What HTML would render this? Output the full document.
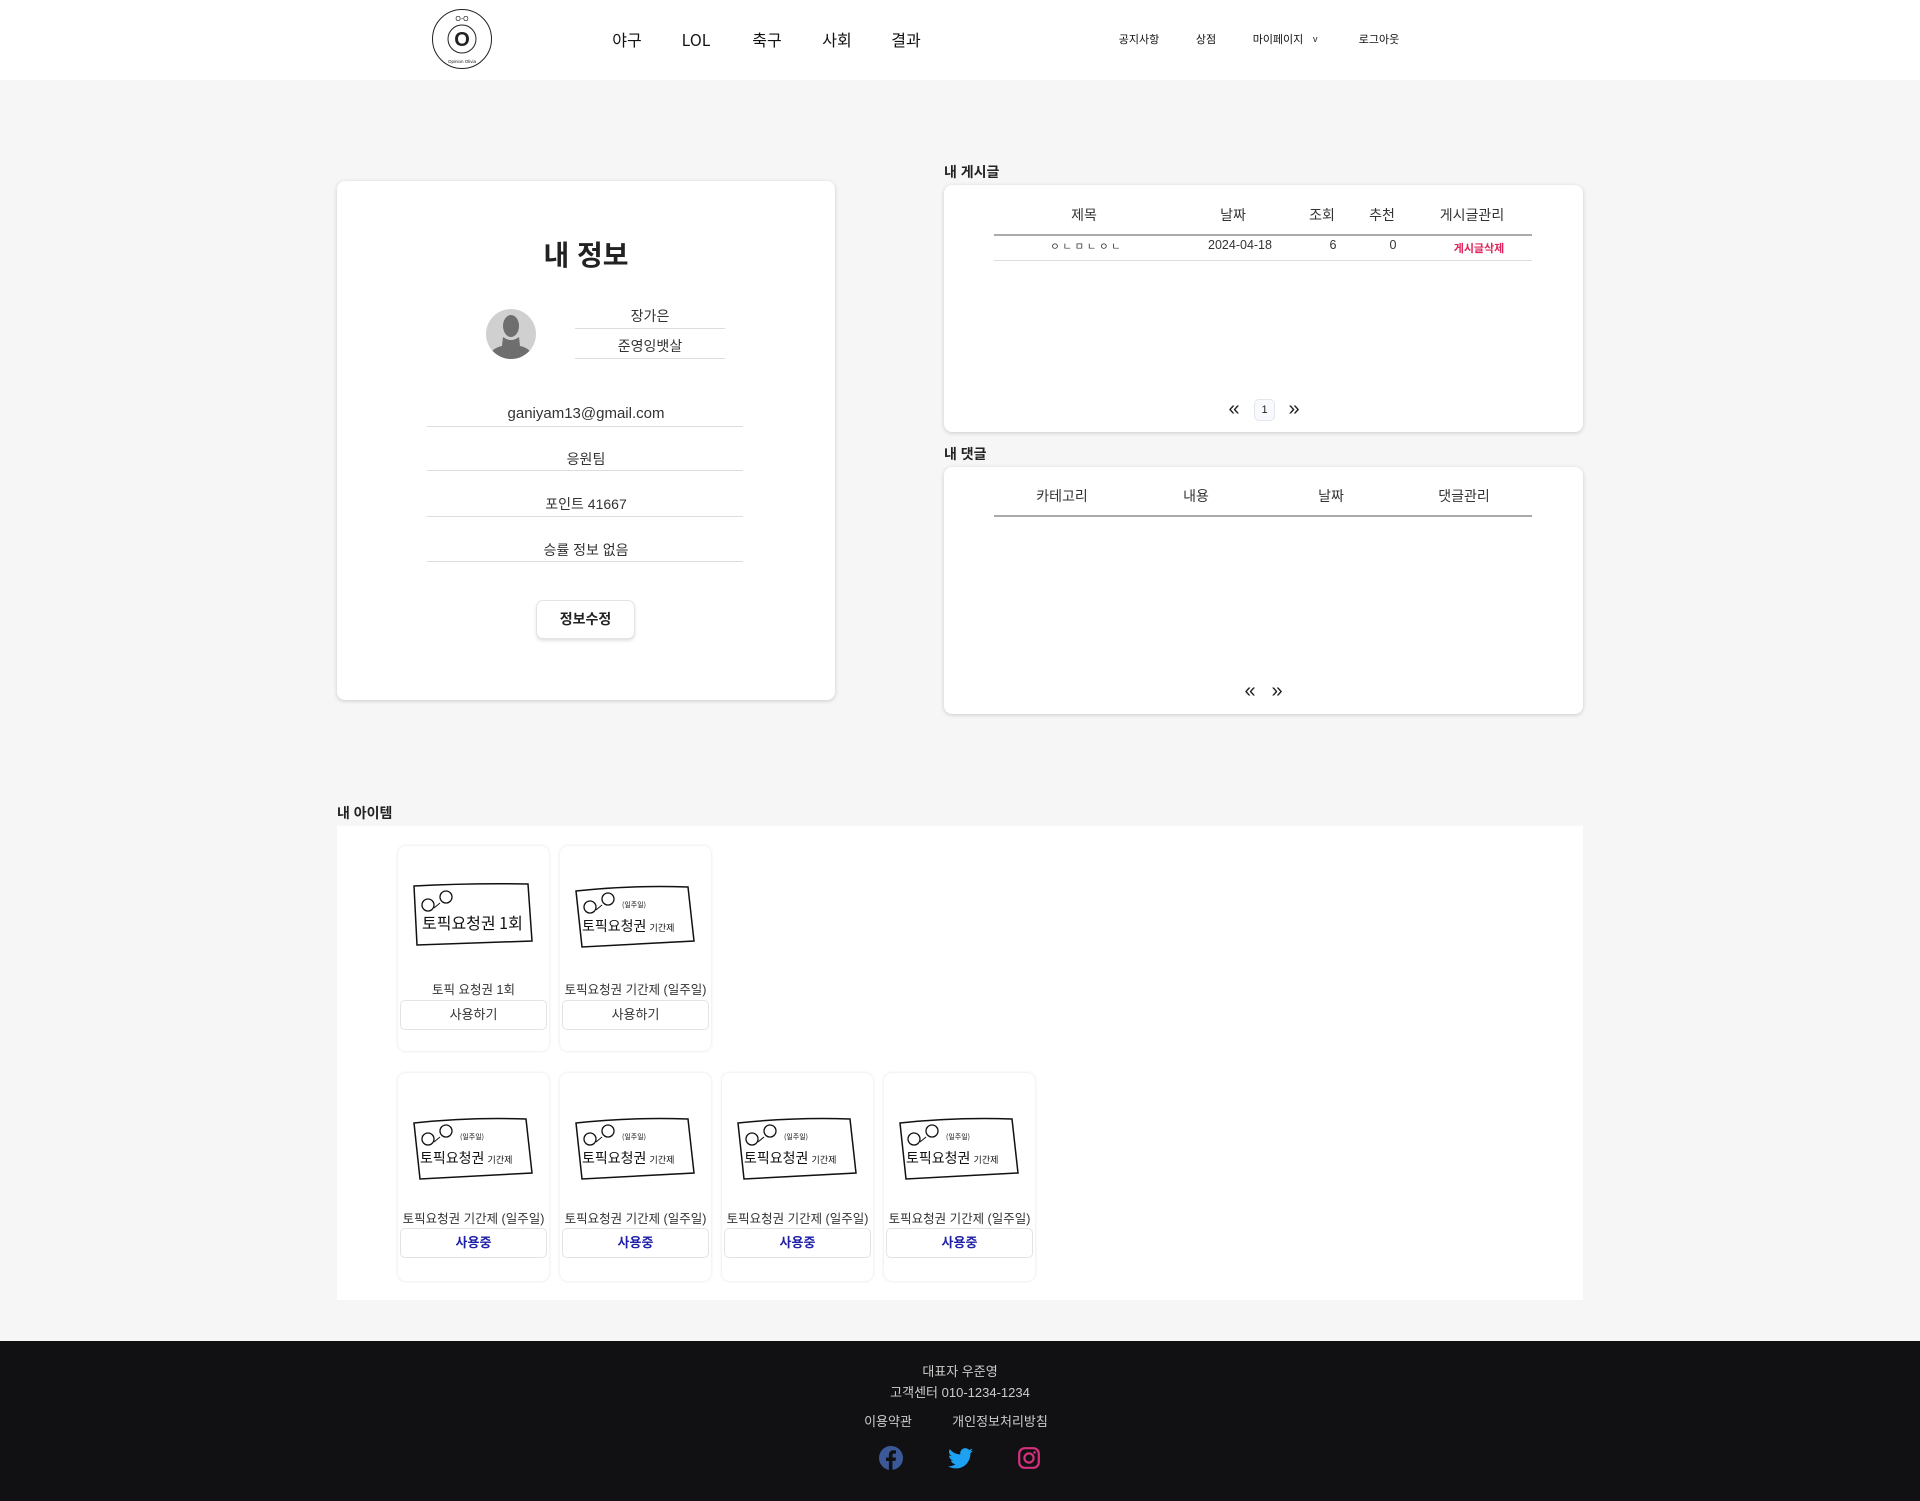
<!DOCTYPE html>
<html><head><meta charset="utf-8"><style>
*{margin:0;padding:0;box-sizing:border-box}
body{width:1920px;height:1501px;background:#f6f6f6;font-family:"Liberation Sans","Noto Sans CJK KR",sans-serif;color:#222;position:relative;overflow:hidden}
.a{position:absolute}
.c{transform:translateX(-50%);white-space:nowrap}
.hdr{left:0;top:0;width:1920px;height:80px;background:#fff}
.nav{font-size:16px;top:28px;height:22px;line-height:22px;color:#111;font-family:"Noto Sans CJK KR",sans-serif}
.sm{font-size:11px;top:31px;line-height:16px;color:#111;font-family:"Noto Sans CJK KR",sans-serif}
.card{background:#fff;border-radius:8px;box-shadow:0 1px 4px rgba(0,0,0,.18)}
.ln{height:1px;background:#ddd}
.t13{font-size:14px;color:#333}
.ic{background:#fff;border-radius:8px;box-shadow:0 0 3px rgba(0,0,0,.12);width:151px}
.ib{position:absolute;left:2px;right:2px;height:30px;border:1px solid #e3e3e3;border-radius:5px;text-align:center;line-height:28px;font-size:13px}
.it{position:absolute;left:0;right:0;text-align:center;font-size:12.5px;color:#333;white-space:nowrap}
.foot{left:0;top:1341px;width:1920px;height:160px;background:#111113;color:#ccc;font-size:13px}
</style></head><body>
<div class="a hdr"></div>
<svg class="a" style="left:431px;top:8px" width="62" height="62" viewBox="0 0 62 62">
<circle cx="31" cy="31" r="29.5" fill="#fff" stroke="#222" stroke-width="1"/>
<circle cx="31" cy="31" r="14" fill="none" stroke="#222" stroke-width="1"/>
<text x="31" y="38" font-size="20" font-weight="bold" text-anchor="middle" font-family="Liberation Sans" fill="#222">O</text>
<text x="31" y="13" font-size="7" text-anchor="middle" font-family="Liberation Sans" fill="#222">O-O</text>
<text x="31" y="55" font-size="4.5" text-anchor="middle" font-family="Liberation Sans" fill="#222">Opinion Olivia</text>
</svg>
<div class="a nav c" style="left:627px">야구</div>
<div class="a nav c" style="left:696px">LOL</div>
<div class="a nav c" style="left:767px">축구</div>
<div class="a nav c" style="left:837px">사회</div>
<div class="a nav c" style="left:906px">결과</div>
<div class="a sm c" style="left:1139px">공지사항</div>
<div class="a sm c" style="left:1206px">상점</div>
<div class="a sm c" style="left:1278px">마이페이지</div>
<div class="a" style="left:1313px;top:33px;font-size:9px;line-height:12px">v</div>
<div class="a sm c" style="left:1379px">로그아웃</div>

<div class="a card" style="left:337px;top:181px;width:498px;height:519px"></div>
<div class="a c" style="left:586px;top:234px;font-size:28px;font-weight:bold;color:#222">내 정보</div>
<svg class="a" style="left:486px;top:309px" width="50" height="50" viewBox="0 0 50 50"><defs><clipPath id="cp"><circle cx="25" cy="25" r="25"/></clipPath></defs><circle cx="25" cy="25" r="25" fill="#d0d0d0"/><g clip-path="url(#cp)" fill="#6e6e6e"><ellipse cx="25" cy="17" rx="8" ry="11"/><path d="M17 28 Q25 34 33 28 L34 37 Q45 39 48 50 L2 50 Q5 39 16 37 Z"/></g></svg>
<div class="a t13 c" style="left:650px;top:306px">장가은</div>
<div class="a ln" style="left:575px;top:328px;width:150px"></div>
<div class="a t13 c" style="left:650px;top:336px">준영잉뱃살</div>
<div class="a ln" style="left:575px;top:358px;width:150px"></div>
<div class="a t13 c" style="left:586px;top:405px;font-size:15px">ganiyam13@gmail.com</div>
<div class="a ln" style="left:427px;top:426px;width:316px"></div>
<div class="a t13 c" style="left:586px;top:449px">응원팀</div>
<div class="a ln" style="left:427px;top:470px;width:316px"></div>
<div class="a t13 c" style="left:586px;top:494px">포인트 41667</div>
<div class="a ln" style="left:427px;top:516px;width:316px"></div>
<div class="a t13 c" style="left:586px;top:540px">승률 정보 없음</div>
<div class="a ln" style="left:427px;top:561px;width:316px"></div>
<div class="a" style="left:536px;top:600px;width:99px;height:39px;background:#fff;border:1px solid #e3e3e3;border-radius:7px;box-shadow:0 2px 3px rgba(0,0,0,.12);text-align:center;line-height:37px;font-size:14px;font-weight:bold;color:#222">정보수정</div>

<div class="a" style="left:944px;top:162px;font-size:14px;font-weight:bold;color:#222">내 게시글</div>
<div class="a card" style="left:944px;top:185px;width:639px;height:247px"></div>
<div class="a t13 c" style="left:1084px;top:205px">제목</div>
<div class="a t13 c" style="left:1233px;top:205px">날짜</div>
<div class="a t13 c" style="left:1322px;top:205px">조회</div>
<div class="a t13 c" style="left:1382px;top:205px">추천</div>
<div class="a t13 c" style="left:1472px;top:205px">게시글관리</div>
<div class="a" style="left:994px;top:234px;width:538px;height:2px;background:#aaa"></div>
<div class="a c" style="left:1087px;top:238px;font-size:10px;letter-spacing:3px;color:#333">ㅇㄴㅁㄴㅇㄴ</div>
<div class="a c" style="left:1240px;top:238px;font-size:12.5px;color:#333">2024-04-18</div>
<div class="a c" style="left:1333px;top:238px;font-size:12.5px;color:#333">6</div>
<div class="a c" style="left:1393px;top:238px;font-size:12.5px;color:#333">0</div>
<div class="a c" style="left:1479px;top:240px;font-size:11px;font-weight:bold;color:#e0245e">게시글삭제</div>
<div class="a ln" style="left:994px;top:260px;width:538px"></div>
<div class="a c" style="left:1234px;top:398px;font-size:20px;color:#222">«</div>
<div class="a" style="left:1254px;top:399px;width:21px;height:22px;border:1px solid #e4e6ee;background:#f8f9fc;border-radius:5px;text-align:center;line-height:20px;font-size:11px;color:#222">1</div>
<div class="a c" style="left:1294px;top:398px;font-size:20px;color:#222">»</div>

<div class="a" style="left:944px;top:444px;font-size:14px;font-weight:bold;color:#222">내 댓글</div>
<div class="a card" style="left:944px;top:467px;width:639px;height:247px"></div>
<div class="a t13 c" style="left:1062px;top:486px">카테고리</div>
<div class="a t13 c" style="left:1196px;top:486px">내용</div>
<div class="a t13 c" style="left:1331px;top:486px">날짜</div>
<div class="a t13 c" style="left:1464px;top:486px">댓글관리</div>
<div class="a" style="left:994px;top:515px;width:538px;height:2px;background:#aaa"></div>
<div class="a c" style="left:1250px;top:680px;font-size:20px;color:#222">«</div>
<div class="a c" style="left:1277px;top:680px;font-size:20px;color:#222">»</div>

<div class="a" style="left:337px;top:803px;font-size:14px;font-weight:bold;color:#222">내 아이템</div>
<div class="a" style="left:337px;top:826px;width:1246px;height:474px;background:#fff"></div>

<svg width="0" height="0" style="position:absolute"><defs>
<g id="tk1"><path d="M4 5 Q60 2 118 3 L122 60 L7 64 Z" fill="none" stroke="#111" stroke-width="1.5"/><circle cx="18" cy="24" r="6" fill="none" stroke="#111" stroke-width="1.3"/><circle cx="36" cy="16" r="6" fill="none" stroke="#111" stroke-width="1.3"/><path d="M24 27 L30 22" stroke="#111"/><text x="12" y="48" font-size="16" font-family="Noto Sans CJK KR" fill="#111">토픽요청권 1회</text></g>
<g id="tk2"><path d="M4 8 Q60 2 116 4 L122 58 L10 64 Z" fill="none" stroke="#111" stroke-width="1.5"/><circle cx="18" cy="24" r="6" fill="none" stroke="#111" stroke-width="1.3"/><circle cx="36" cy="16" r="6" fill="none" stroke="#111" stroke-width="1.3"/><path d="M24 27 L30 22" stroke="#111"/><text x="50" y="24" font-size="7" font-family="Noto Sans CJK KR" fill="#111">(일주일)</text><text x="10" y="48" font-size="14" font-family="Noto Sans CJK KR" fill="#111">토픽요청권 <tspan font-size="9">기간제</tspan></text></g>
</defs></svg>

<div class="a ic" style="left:398px;top:846px;height:205px"><svg class="a" style="left:12px;top:35px" width="128" height="70"><use href="#tk1"/></svg><div class="it" style="top:133px">토픽 요청권 1회</div><div class="ib" style="top:154px;color:#333">사용하기</div></div>
<div class="a ic" style="left:560px;top:846px;height:205px"><svg class="a" style="left:12px;top:37px" width="128" height="70"><use href="#tk2"/></svg><div class="it" style="top:133px">토픽요청권 기간제 (일주일)</div><div class="ib" style="top:154px;color:#333">사용하기</div></div>
<div class="a ic" style="left:398px;top:1073px;height:208px"><svg class="a" style="left:12px;top:42px" width="128" height="70"><use href="#tk2"/></svg><div class="it" style="top:135px">토픽요청권 기간제 (일주일)</div><div class="ib" style="top:155px;color:#1f1fa8;font-weight:bold">사용중</div></div>
<div class="a ic" style="left:560px;top:1073px;height:208px"><svg class="a" style="left:12px;top:42px" width="128" height="70"><use href="#tk2"/></svg><div class="it" style="top:135px">토픽요청권 기간제 (일주일)</div><div class="ib" style="top:155px;color:#1f1fa8;font-weight:bold">사용중</div></div>
<div class="a ic" style="left:722px;top:1073px;height:208px"><svg class="a" style="left:12px;top:42px" width="128" height="70"><use href="#tk2"/></svg><div class="it" style="top:135px">토픽요청권 기간제 (일주일)</div><div class="ib" style="top:155px;color:#1f1fa8;font-weight:bold">사용중</div></div>
<div class="a ic" style="left:884px;top:1073px;height:208px"><svg class="a" style="left:12px;top:42px" width="128" height="70"><use href="#tk2"/></svg><div class="it" style="top:135px">토픽요청권 기간제 (일주일)</div><div class="ib" style="top:155px;color:#1f1fa8;font-weight:bold">사용중</div></div>

<div class="a foot"></div>
<div class="a c" style="left:960px;top:1361px;font-size:13px;color:#ccc">대표자 우준영</div>
<div class="a c" style="left:960px;top:1382px;font-size:13px;color:#ccc">고객센터 010-1234-1234</div>
<div class="a c" style="left:888px;top:1411px;font-size:13px;color:#ccc">이용약관</div>
<div class="a c" style="left:1000px;top:1411px;font-size:13px;color:#ccc">개인정보처리방침</div>
<svg class="a" style="left:879px;top:1446px" width="24" height="24" viewBox="0 0 24 24"><circle cx="12" cy="12" r="12" fill="#3b5998"/><path d="M13.5 24V15h3l.5-3.5h-3.5V9.3c0-1 .3-1.7 1.8-1.7H17V4.5c-.3 0-1.4-.2-2.7-.2-2.6 0-4.4 1.6-4.4 4.6v2.6H7V15h2.9v9z" fill="#111113"/></svg>
<svg class="a" style="left:948px;top:1448px" width="25" height="21" viewBox="0 0 24 20"><path d="M24 2.4c-.9.4-1.8.7-2.8.8 1-.6 1.8-1.6 2.2-2.7-1 .6-2 1-3.1 1.2A4.9 4.9 0 0 0 11.9 6.200 14 14 0 0 1 1.7 1 4.9 4.9 0 0 0 3.2 7.6c-.8 0-1.6-.2-2.2-.6 0 2.4 1.700 4.4 3.900 4.8-.7.2-1.5.2-2.2.1.6 2 2.4 3.4 4.6 3.4A9.9 9.9 0 0 1 0 17.3 14 14 0 0 0 7.5 19.5c9.1 0 14-7.5 14-14v-.6c1-.7 1.8-1.6 2.5-2.5z" fill="#1da1f2"/></svg>
<svg class="a" style="left:1018px;top:1447px" width="22" height="22" viewBox="0 0 22 22"><rect x="1.2" y="1.2" width="19.6" height="19.6" rx="5.5" fill="none" stroke="#d6307d" stroke-width="2.2"/><circle cx="11" cy="11" r="4.6" fill="none" stroke="#d6307d" stroke-width="2.2"/><circle cx="16.6" cy="5.4" r="1.3" fill="#d6307d"/></svg>
</body></html>
